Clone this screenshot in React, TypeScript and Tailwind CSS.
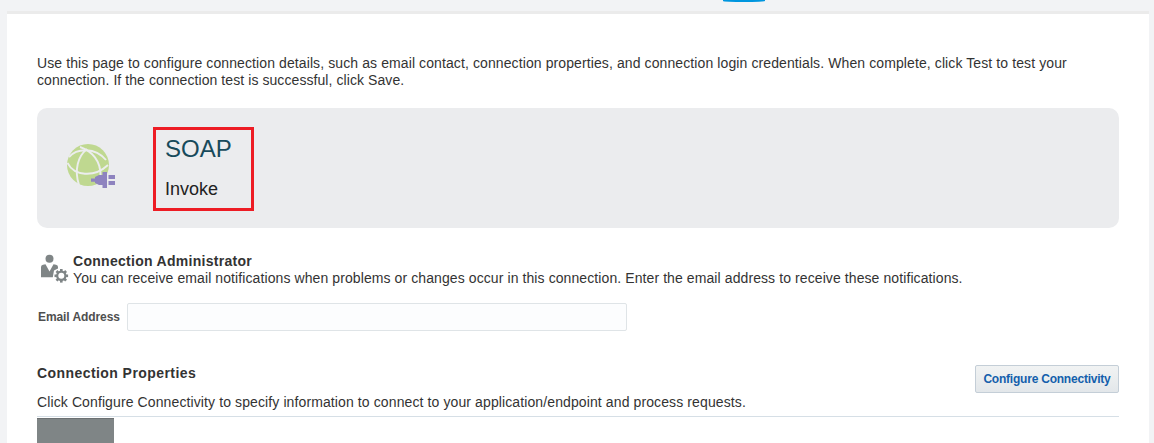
function GlobePlugIcon() {
  return (
    <svg className="block h-[48px] w-[50px]" viewBox="0 0 50 48" fill="none">
      <circle cx="21" cy="21" r="21" fill="#bfd890" />
      <g stroke="#ecedee" strokeWidth="1.900">
        <path d="M2 13C10 4 28 3 39 16" />
        <path d="M20 5C11 12 7 26 12 41" />
        <path d="M13 3C25 7 34 17 33.500 32" />
        <path d="M0.500 19C7 32 27 34 41 21" />
      </g>
      <path d="M24 34.500H28V33L32 31H35.500V28H40V44H35.500V41H32L28 39V37.700H24Z" fill="#8e83bf" />
      <path d="M41.500 31H48V35H41.500ZM41.500 37H48V41H41.500Z" fill="#8e83bf" />
    </svg>
  );
}

function AdministratorIcon() {
  const teeth = [0, 45, 90, 135, 180, 225, 270, 315];
  return (
    <svg className="block h-[30px] w-[29px]" viewBox="0 0 29 30" fill="#7f8586">
      <circle cx="9.500" cy="4.700" r="4" />
      <path d="M1 13Q1 11.200 3 10.700L5.500 10.200L9.500 17.500L13.500 10.200L16 10.700Q18 11.200 18 13V14.500L14 16.500L12.800 23.300H1Z" />
      <circle cx="21.300" cy="21.800" r="4.100" fill="none" stroke="#7f8586" strokeWidth="2.200" />
      {teeth.map((angle) => (
        <rect key={angle} x="20" y="15" width="2.600" height="3" transform={`rotate(${angle} 21.300 21.800)`} />
      ))}
    </svg>
  );
}

export default function App() {
  return (
    <div className="flex h-[443px] flex-col overflow-hidden bg-[#f2f3f5] pr-[5px] pl-[7px] font-['Liberation_Sans',Arial,sans-serif] text-[14px] leading-[17px] text-[#333333]">
      <div className="h-[11px] shrink-0 pl-[716px]">
        <div className="h-[2px] w-[42px] rounded-b-[50%] bg-[#0096df]" />
      </div>
      <main className="flex-1 border-t-[3px] border-[#ebebeb] bg-white pr-[30px] pl-[30px]">
        <p className="pt-[41px] tracking-[0.102px] whitespace-nowrap">
          Use this page to configure connection details, such as email contact, connection properties, and connection login credentials. When complete, click Test to test your
          <br />
          <span className="tracking-[0.075px]">connection. If the connection test is successful, click Save.</span>
        </p>

        <section className="mt-[19px] flex h-[120px] rounded-[10px] bg-[#ebecee] pl-[30px]">
          <div className="w-[86px] pt-[36px]">
            <GlobePlugIcon />
          </div>
          <div className="mt-[19px] h-[84px] w-[101px] border-[3px] border-[#ed1c24] pl-[9px]">
            <h1 className="pt-[5px] text-[24px] leading-[28px] text-[#174a5b]">SOAP</h1>
            <p className="mt-[16px] text-[18px] leading-[20px] text-[#222222]">Invoke</p>
          </div>
        </section>

        <section className="mt-[25px] flex pl-[3px]">
          <div className="w-[33px] pt-[1px]">
            <AdministratorIcon />
          </div>
          <div className="whitespace-nowrap">
            <h2 className="font-bold tracking-[0.290px]">Connection Administrator</h2>
            <p className="tracking-[0.092px]">You can receive email notifications when problems or changes occur in this connection. Enter the email address to receive these notifications.</p>
          </div>
        </section>

        <div className="mt-[16px] flex items-center pl-[1px]">
          <label htmlFor="email" className="w-[89px] text-[12px] font-bold tracking-[-0.080px] text-[#4f4f4f]">Email Address</label>
          <input id="email" type="email" className="h-[28px] w-[500px] rounded-[2px] border border-[#dfe4e7] bg-[#fcfdfe] px-2" />
        </div>

        <section className="mt-[34px]">
          <div className="flex h-[28px] justify-between">
            <h2 className="font-bold tracking-[0.430px]">Connection Properties</h2>
            <button className="h-[28px] w-[144px] rounded-[2px] border border-[#c4ced7] bg-linear-to-b from-[#f1f3f3] to-[#e3e7ea] text-[12px] font-bold tracking-[-0.220px] whitespace-nowrap text-[#145fac]">Configure Connectivity</button>
          </div>
          <p className="h-[24px] border-b border-[#d6dfe6] pt-[1px] tracking-[0.110px]">Click Configure Connectivity to specify information to connect to your application/endpoint and process requests.</p>
          <div className="mt-[1px] h-[25px] w-[77px] border-t border-[#6c7072] bg-[#7f8586]" />
        </section>
      </main>
    </div>
  );
}
